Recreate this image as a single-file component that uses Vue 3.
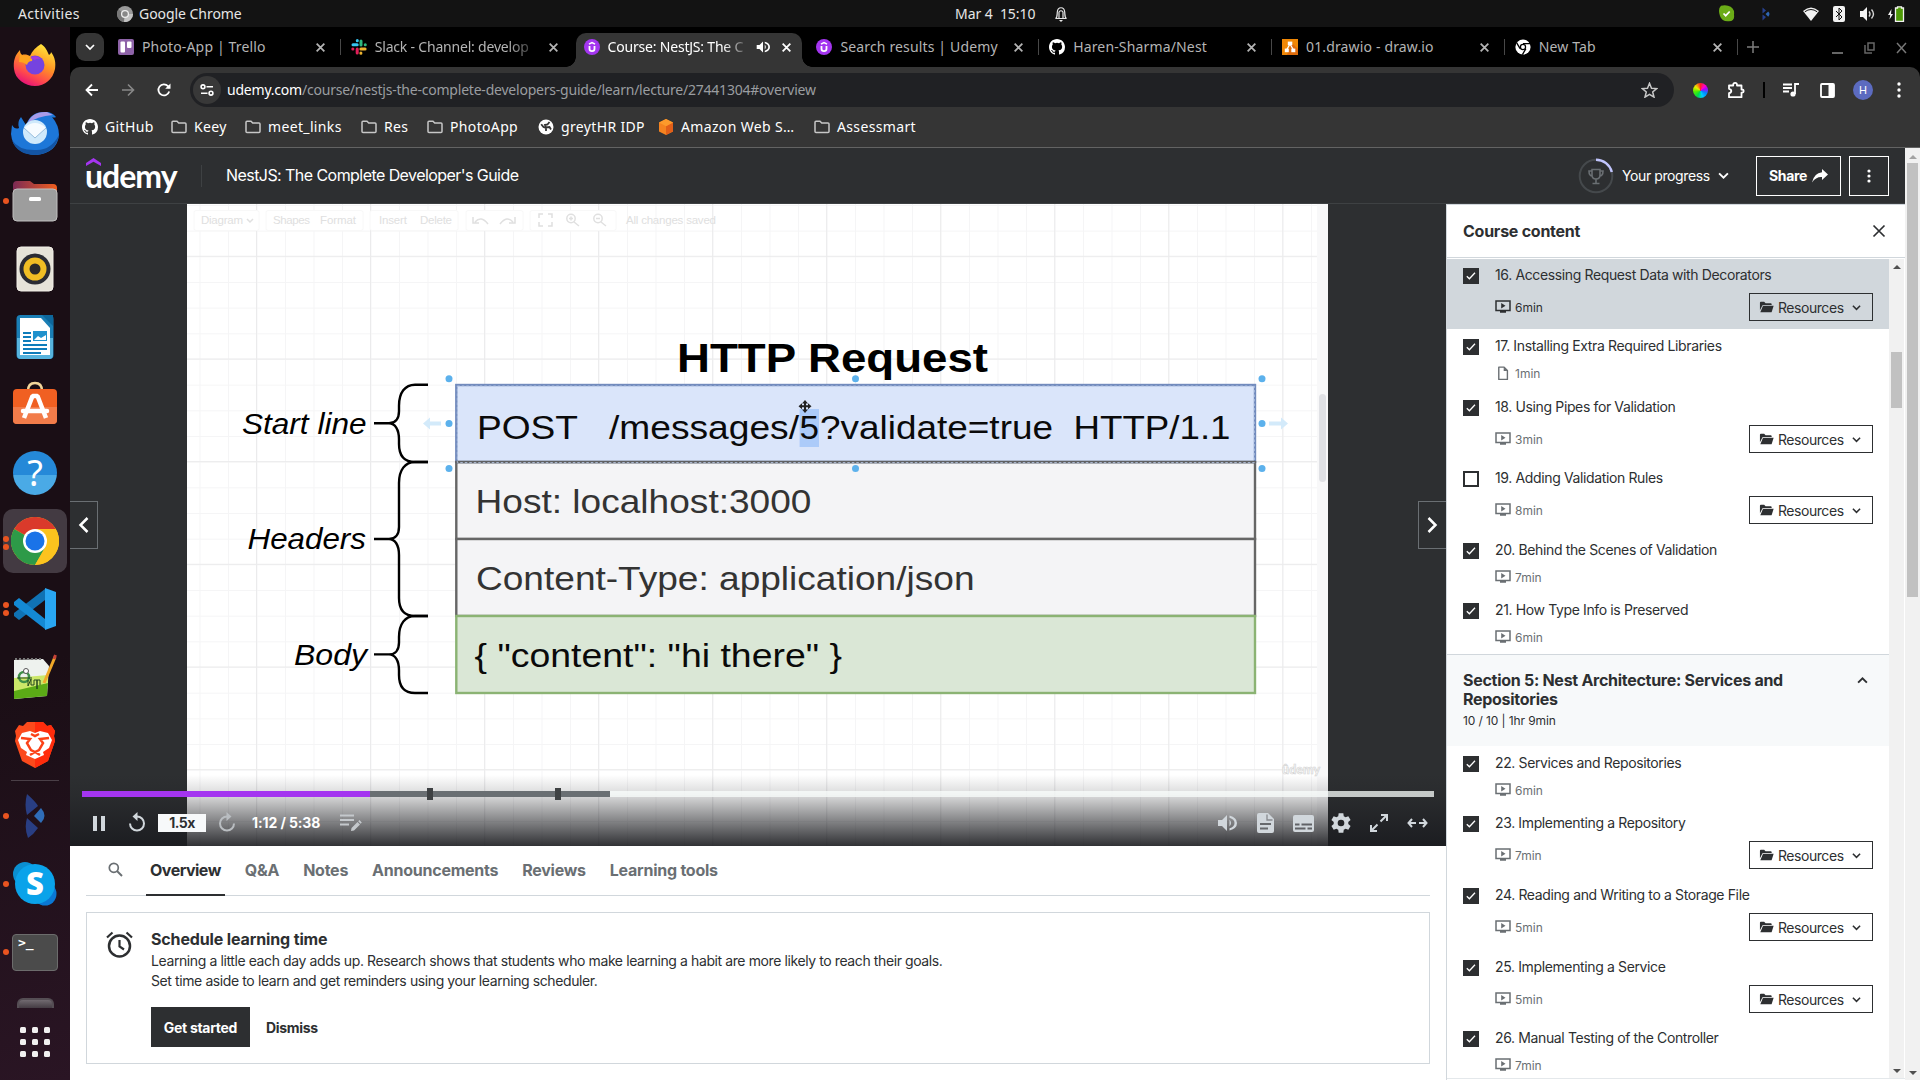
<script setup>
const tabs = [
  { title: 'Photo-App | Trello', icon: 'trello' },
  { title: 'Slack - Channel: develop', icon: 'slack', fade: true, noSep: true },
  { title: 'Course: NestJS: The C', icon: 'udemy', active: true, audio: true, fade: true, noSep: true },
  { title: 'Search results | Udemy', icon: 'udemy' },
  { title: 'Haren-Sharma/Nest', icon: 'github' },
  { title: '01.drawio - draw.io', icon: 'drawio' },
  { title: 'New Tab', icon: 'chrome' },
]

const bookmarks = [
  { label: 'GitHub', icon: 'github', width: 89 },
  { label: 'Keey', icon: 'folder', width: 74 },
  { label: 'meet_links', icon: 'folder', width: 116 },
  { label: 'Res', icon: 'folder', width: 66 },
  { label: 'PhotoApp', icon: 'folder', width: 111 },
  { label: 'greytHR IDP', icon: 'globe', width: 120 },
  { label: 'Amazon Web S…', icon: 'cube', width: 156 },
  { label: 'Assessmart', icon: 'folder', width: 110 },
]

const courseTabs = ['Overview', 'Q&A', 'Notes', 'Announcements', 'Reviews', 'Learning tools']

const lecturesBefore = [
  { title: '16. Accessing Request Data with Decorators', time: '6min', done: true, res: true, current: true, h: 70 },
  { title: '17. Installing Extra Required Libraries', time: '1min', done: true, doc: true, h: 61 },
  { title: '18. Using Pipes for Validation', time: '3min', done: true, res: true, h: 71 },
  { title: '19. Adding Validation Rules', time: '8min', res: true, h: 72 },
  { title: '20. Behind the Scenes of Validation', time: '7min', done: true, h: 60 },
  { title: '21. How Type Info is Preserved', time: '6min', done: true, h: 61 },
]
const lecturesAfter = [
  { title: '22. Services and Repositories', time: '6min', done: true, h: 60 },
  { title: '23. Implementing a Repository', time: '7min', done: true, res: true, h: 72 },
  { title: '24. Reading and Writing to a Storage File', time: '5min', done: true, res: true, h: 72 },
  { title: '25. Implementing a Service', time: '5min', done: true, res: true, h: 71 },
  { title: '26. Manual Testing of the Controller', time: '7min', done: true, h: 58 },
]
const groups = [
  { id: 4, items: lecturesBefore },
  { id: 5, heading: 'Section 5: Nest Architecture: Services and Repositories', meta: '10 / 10 | 1hr 9min', items: lecturesAfter },
]

const handles = [
  [449, 378.7], [449, 423.6], [449, 468.6],
  [855.5, 378.7], [855.5, 468.6],
  [1262, 378.7], [1262, 423.6], [1262, 468.6],
]
const braces = [
  { top: 384.7, mid: 423.3, bottom: 462 },
  { top: 462, mid: 539, bottom: 616 },
  { top: 616, mid: 654.4, bottom: 693 },
]
const bracePath = (b) =>
  `M428 ${b.top}H415C405 ${b.top} 399 ${b.top + 8} 399 ${b.top + 21}V${b.mid - 12}C399 ${b.mid - 4} 395 ${b.mid} 389 ${b.mid}H374` +
  `M389 ${b.mid}C395 ${b.mid} 399 ${b.mid + 6} 399 ${b.mid + 16}V${b.bottom - 18}C399 ${b.bottom - 5} 405 ${b.bottom} 415 ${b.bottom}H428`
</script>

<template>
  <div class="desktop">
    <!-- shared symbols -->
    <svg class="defs" width="0" height="0">
      <defs>
        <symbol id="i-github" viewBox="0 0 16 16"><path fill="#fff" d="M8 0C3.58 0 0 3.58 0 8c0 3.54 2.29 6.53 5.47 7.59.4.07.55-.17.55-.38v-1.49c-2.01.37-2.53-.49-2.69-.94-.09-.23-.48-.94-.82-1.13-.28-.15-.68-.52-.01-.53.63-.01 1.08.58 1.23.82.72 1.21 1.87.87 2.33.66.07-.52.28-.87.51-1.07-1.78-.2-3.64-.89-3.64-3.95 0-.87.31-1.59.82-2.15-.08-.2-.36-1.02.08-2.12 0 0 .67-.21 2.2.82a7.6 7.6 0 0 1 4 0c1.53-1.04 2.2-.82 2.2-.82.44 1.1.16 1.92.08 2.12.51.56.82 1.27.82 2.15 0 3.07-1.87 3.75-3.65 3.95.29.25.54.73.54 1.48v2.2c0 .21.15.46.55.38A8 8 0 0 0 16 8c0-4.42-3.58-8-8-8z"/></symbol>
        <symbol id="i-trello" viewBox="0 0 16 16"><rect width="16" height="16" rx="2" fill="#8e63a8"/><rect x="2.5" y="2.5" width="4.5" height="11" rx="1" fill="#fff"/><rect x="9" y="2.5" width="4.5" height="6.5" rx="1" fill="#fff"/></symbol>
        <symbol id="i-slack" viewBox="0 0 16 16"><g stroke-width="3" stroke-linecap="round"><path stroke="#36c5f0" d="M6.3 1.6v.1M2 5.8h4.2"/><path stroke="#2eb67d" d="M10 2v4M14.2 5.8h.1"/><path stroke="#e01e5a" d="M1.8 9.9h.1M6.2 10v4"/><path stroke="#ecb22e" d="M9.9 9.9h4.2M9.9 14.1v.1"/></g></symbol>
        <symbol id="i-udemy" viewBox="0 0 16 16"><circle cx="8" cy="8" r="8" fill="#a435f0"/><path d="M5 5.2 8 3.5l3 1.7" fill="none" stroke="#fff" stroke-width="1.5"/><path d="M5.5 7v2.8c0 3.2 5 3.2 5 0V7" fill="none" stroke="#fff" stroke-width="1.8"/></symbol>
        <symbol id="i-drawio" viewBox="0 0 16 16"><rect width="16" height="16" fill="#f08705"/><path d="m9 3 7 7v6H5z" fill="#df6c0c"/><path d="m8 5-3.500 6M8 5l3.500 6" stroke="#fff" stroke-width="1.300"/><rect x="5.800" y="2.600" width="4.500" height="3.600" fill="#fff"/><rect x="2.800" y="9.600" width="4" height="3.600" fill="#fff"/><rect x="9.300" y="9.600" width="4" height="3.600" fill="#fff"/></symbol>
        <symbol id="i-chrome" viewBox="0 0 16 16"><circle cx="8" cy="8" r="7.600" fill="#fff"/><circle cx="8" cy="8" r="2.600" fill="none" stroke="#000" stroke-width="1.300"/><path d="M8 4.700h7M5.100 9.700 1.700 3.900M10.900 9.600l-3.500 6" stroke="#000" stroke-width="1.300"/></symbol>
        <symbol id="i-folder" viewBox="0 0 16 16"><path d="M1 3.200q0-1 1-1h4l1.700 1.800h6.300q1 0 1 1v7.500q0 1-1 1H2q-1 0-1-1z" fill="none" stroke="#c7c7c7" stroke-width="1.500"/></symbol>
        <symbol id="i-globe" viewBox="0 0 16 16"><circle cx="8" cy="8" r="7.500" fill="#fff"/><path d="M3.200 5.200 5.500 8l2.500 1v3M11.500 3l-2 2.500-2.500.5 1 2.500 3.500-.5 1.500 2.500" stroke="#353535" stroke-width="1.800" fill="none"/></symbol>
        <symbol id="i-cube" viewBox="0 0 16 16"><path d="m8 0 7 3.500v9L8 16l-7-3.500v-9z" fill="#f58320"/><path d="M8 7.200V16l7-3.500v-9z" fill="#e25f19"/><path d="m8 0 7 3.500-7 3.700-7-3.700z" fill="#fd9a2b"/></symbol>
        <symbol id="i-x" viewBox="0 0 10 10"><path d="m1.500 1.500 7 7m0-7-7 7" fill="none" stroke="currentColor" stroke-width="1.600"/></symbol>
        <symbol id="i-chev" viewBox="0 0 10 10"><path d="m1 3 4 4 4-4" fill="none" stroke="currentColor" stroke-width="1.700"/></symbol>
        <symbol id="i-speaker" viewBox="0 0 20 20"><path d="M1 7h4l5-5v16l-5-5H1z" fill="currentColor"/><path d="M12.500 6.500q3 3.500 0 7M12.500 2.500q7.500 2 7.500 7.500t-7.500 7.500v-2.200q5-1.500 5-5.300t-5-5.300z" fill="currentColor"/></symbol>
        <symbol id="i-screen" viewBox="0 0 16 14"><path d="M1 1h14v9.500H1z" fill="none" stroke="currentColor" stroke-width="1.500"/><path d="M6.200 3v5.400L10.500 5.700zM5 11h6v1.800H5z" fill="currentColor"/></symbol>
        <symbol id="i-doc" viewBox="0 0 12 16"><path d="M1.500 1.200h5.700l3.500 3.500v9.600H1.500z" fill="none" stroke="currentColor" stroke-width="1.500" stroke-linejoin="round"/><path d="M6.700 1v4.300H11z" fill="currentColor"/></symbol>
        <symbol id="i-open" viewBox="0 0 16 12"><path d="M1 9.500V1.500q0-1 1-1h3.500L7 2h5.500q1 0 1 1v.8H4.600q-1 0-1.300 1z" fill="currentColor"/><path d="M4.300 4.700H15.600l-2 6.300q-.2.600-.8.600H1.400z" fill="currentColor"/></symbol>
      </defs>
    </svg>

    <header class="topbar">
      <div class="tb-left">
        <span class="activities">Activities</span>
        <svg width="16" height="16" viewBox="0 0 16 16"><circle cx="8" cy="8" r="8" fill="#999"/><path d="M8 8 1.500 3.500A8 8 0 0 0 7 16z" fill="#777"/><path d="M8 8h8A8 8 0 0 1 7 16z" fill="#c2c2c2"/><circle cx="8" cy="8" r="3.400" fill="#888" stroke="#eee" stroke-width="1.300"/></svg>
        <span class="appname">Google Chrome</span>
      </div>
      <div class="tb-mid">
        <span>Mar 4&nbsp; 15:10</span>
        <svg width="14" height="16" viewBox="0 0 14 16"><path d="M1.500 12.500c2-1 1.500-4 1.800-6.500.4-5.700 7-5.700 7.400 0 .3 2.500-.2 5.500 1.800 6.500zM5 12V6q2-2.500 4 0v6" fill="none" stroke="#e8e8e8" stroke-width="1.200"/><path d="M5 14h4l-2 2z" fill="#e8e8e8"/></svg>
      </div>
      <div class="tray">
        <svg width="17" height="17" viewBox="0 0 17 17"><path d="M3 .8q4-1 7 0 7 2 6 9 1 6-5 6.500Q4 17 2 11-.500 4 3 .8z" fill="#6bac17"/><path d="m5.500 8.500 2.200 2.200 4-4.200" fill="none" stroke="#fff" stroke-width="1.700"/></svg>
        <svg class="kl" width="8" height="14" viewBox="0 0 18 32"><path d="M1 1v14l8-7zM1 17v14l8-8z" fill="#27408f"/><path d="m8 16 6-6q6 6 0 12z" fill="#2f66b4"/></svg>
        <svg class="wf" width="16" height="14" viewBox="0 0 16 14"><path d="M0 4q8-7 16 0l-8 10z" fill="#f2f2f2"/><path d="M1.800 4.800q6.200-4.600 12.400 0" stroke="#131313" fill="none"/></svg>
        <svg class="bt" width="12" height="16" viewBox="0 0 12 16"><rect width="12" height="16" rx="2" fill="#f2f2f2"/><path d="m3 5 6 6-3 3V2l3 3-6 6" stroke="#131313" fill="none"/></svg>
        <svg class="vol" width="15" height="14" viewBox="0 0 15 14"><path d="M0 4h3l4-4v14l-4-4H0z" fill="#f2f2f2"/><path d="M9 4.500q2 2.500 0 5M11.500 2.500q4 4.500 0 9" stroke="#d6d6d6" stroke-width="1.400" fill="none"/></svg>
        <svg class="bat" width="17" height="16" viewBox="0 0 17 16"><path d="M3.500 3 0 9h2.200L1.500 13.500 5 8H3z" fill="#f2f2f2"/><path d="M7.500 2h2V.8h4V2h2v13.300h-8z" fill="#4e9a06" stroke="#f2f2f2" stroke-width="1.300"/></svg>
      </div>
    </header>

    <div class="body">
      <nav class="dock">
        <div class="di"><svg width="44" height="44" viewBox="0 0 44 44">
          <defs><linearGradient id="ff" x1=".8" y1="0" x2=".3" y2="1"><stop offset="0" stop-color="#ffee3d"/><stop offset=".45" stop-color="#ff9424"/><stop offset=".75" stop-color="#ff4a4c"/><stop offset="1" stop-color="#e50e7c"/></linearGradient></defs>
          <path d="M28 1c5 3 6 7 8 11 2-1 2-3 2-3 4 5 5 11 4 17-2 10-10 17-20 17S2 36 1 26C0 18 2 12 7 7c0 3 1 4 2 5 3-1 6 0 8 1 2-5 6-9 11-12z" fill="url(#ff)"/><circle cx="22" cy="22" r="9.500" fill="#7543e0"/><path d="M7 11q5 3 10 2 3 3 2 5-4 0-5 4-3-3-8-3z" fill="#ffa51f"/><path d="M17 15q6-4 11 1-5-1-6 1z" fill="#a33be0"/></svg></div>
        <div class="di"><svg width="50" height="46" viewBox="0 0 50 46">
          <path d="M2 15q3 5 7 3Q7 12 11 7q3 5 5 8 5-14 20-13 6 0 10 5-2 1-4 0 7 8 7 18-2 18-23 20Q3 44 1 24z" fill="#1d77d8"/><path d="M2 30q5 15 24 15 20-2 23-20-8 15-22 15Q9 41 2 30z" fill="#1354a3"/><path d="M17 14q5-13 20-12l6 3Q27 6 17 14z" fill="#a99be8"/><circle cx="25" cy="22" r="12" fill="#cfe9fb"/><path d="M14 18q11-10 22 0l-11 10z" fill="#f6fbff"/><path d="m14 18 11 10 11-10" fill="none" stroke="#97bddc"/></svg></div>
        <div class="di"><i class="run"></i><svg width="46" height="42" viewBox="0 0 46 42"><defs><linearGradient id="fd"><stop offset="0" stop-color="#7c2a55"/><stop offset="1" stop-color="#f05e1e"/></linearGradient></defs><path d="M1 10V5q0-4 4-4h13l4 3h19q4 0 4 4v6z" fill="url(#fd)"/><rect x="1" y="9" width="44" height="32" rx="4" fill="#9d9d9d" stroke="#c0bfbf"/><rect x="17" y="17" width="12" height="4" rx="1.500" fill="#fff"/></svg></div>
        <div class="di"><svg width="38" height="46" viewBox="0 0 38 46"><rect x="1" y="1" width="36" height="44" rx="4" fill="#e6e2d8" stroke="#f2efe8"/><circle cx="19" cy="23" r="15.500" fill="#2b2b33"/><circle cx="19" cy="23" r="11.500" fill="#f0bd24"/><circle cx="19" cy="23" r="5.500" fill="#2a2a2a"/></svg></div>
        <div class="di"><svg width="38" height="46" viewBox="0 0 38 46"><rect x=".500" y="1" width="37" height="44" rx="4" fill="#1a7eb5"/><path d="M1 24h36v17q0 4-4 4H5q-4 0-4-4z" fill="#57b3dd"/><path d="M4 4h21l9 10v27H4z" fill="#fff"/><path d="M26 1h11v11z" fill="#0d679c"/><path d="M7 19h8M7 23h8M7 27h8M7 31h24M7 35h24M7 39h18" stroke="#0f7cba" stroke-width="2"/><rect x="17" y="17" width="14" height="10" fill="#2091cc"/><path d="m18 26 4-4 3 2 5-3v5z" fill="#fff"/></svg></div>
        <div class="di bag"><svg width="46" height="44" viewBox="0 0 46 44"><path d="M16 10q0-8 7-8t7 8" stroke="#f3d69a" stroke-width="2.500" fill="none"/><rect x="1" y="8" width="44" height="35" rx="4" fill="#f06022"/><path d="M1 26h44v13q0 4-4 4H5q-4 0-4-4z" fill="#f27c4a"/><path d="m12 37 8.500-22h5L34 37" fill="none" stroke="#fff" stroke-width="4.500" stroke-linejoin="bevel"/><path d="M11 30h24" stroke="#fff" stroke-width="4.500" stroke-linecap="round"/></svg></div>
        <div class="di"><span class="help">?</span></div>
        <div class="di cur"><i class="run"></i><i class="run"></i><svg width="48" height="48" viewBox="0 0 48 48"><circle cx="24" cy="24" r="24" fill="#fcc31e"/><path d="M24 24 3.200 12A24 24 0 0 1 44.800 12z" fill="#da3a2b"/><path d="M24 24 3.200 12A24 24 0 0 0 24 48l10.400-18z" fill="#2d9a48"/><path d="M24 12h20.800A24 24 0 0 1 24 48l10.400-18z" fill="#fcc31e"/><circle cx="24" cy="24" r="12" fill="#fff"/><circle cx="24" cy="24" r="9.500" fill="#1a73e8"/></svg></div>
        <div class="di"><i class="run"></i><i class="run"></i><svg width="42" height="42" viewBox="0 0 42 42"><path d="M31 1v11L5 32l-5-4v-3z" fill="#1072b4"/><path d="m0 14 5-4 26 21v10L0 17z" fill="#1489d4"/><path d="m31 0 11 4v34l-11 4z" fill="#29a6f2"/></svg></div>
        <div class="di"><svg width="44" height="46" viewBox="0 0 44 46"><path d="M1 6 30 5l6 7-2 30L1 45z" fill="#eef2ee"/><path d="m1 34 34-6-1 14L1 45z" fill="#5bab16"/><path d="m1 24 34-3v8L1 37z" fill="#cce869"/><path d="M2 5h26" stroke="#777" stroke-dasharray="2 2" stroke-width="2"/><circle cx="11" cy="23" r="5" fill="none" stroke="#3f9048" stroke-width="2.500"/><circle cx="13" cy="17" r="2.500" fill="#fff" stroke="#555"/><path d="M4 24h15M15 26v6l3-7v6h3v-5h3v9-9h3v5" fill="none" stroke="#23471e"/><path d="m31 29 11-26" stroke="#f0a828" stroke-width="3"/><path d="m41 5 1.500-4" stroke="#c54238" stroke-width="3"/></svg></div>
        <div class="di"><svg width="42" height="48" viewBox="0 0 42 48"><path d="M13 1h16l4 4 4-1 4 6-1 5 1 5-7 20-13 7-13-7L1 20l1-5-1-5 4-6 4 1z" fill="#fb4a1c"/><path d="M21 1h8l4 4 4-1 4 6-1 5 1 5-7 20-13 7z" fill="#ff2c0c"/><path d="m8 12 8-2 5 2 5-2 8 2 4 7-3 8-6 4 1 3-9 4-9-4 1-3-6-4-3-8z" fill="#fff"/><path d="m7 17 9 1-3 4 4 7 4 2 4-2 4-7-3-4 9-1M16 34l5-3 5 3M17 13l4 2 4-2" fill="none" stroke="#fb4218" stroke-width="2.500"/></svg></div>
        <hr />
        <div class="di"><i class="run"></i><svg width="20" height="44" viewBox="0 0 20 44"><path d="M2 0q9 8 11 12L2 21q-3-10 0-21zM2 24l11 10Q9 40 3 44-1 34 2 24z" fill="#293e83"/><path d="m9 22 7-8q7 8 0 15z" fill="#2f6db8"/></svg></div>
        <div class="di"><i class="run"></i><span class="skype"><svg width="44" height="44" viewBox="0 0 44 44"><circle cx="12" cy="12" r="12" fill="#0b8fd0"/><circle cx="32" cy="32" r="11.500" fill="#0a78d4"/><circle cx="22" cy="22" r="20" fill="#0aa3ea"/></svg><b>S</b></span></div>
        <div class="di"><i class="run"></i><span class="term">&gt;_</span></div>
        <div class="trash"></div>
        <div class="grid9"><i v-for="n in 9" :key="n"></i></div>
      </nav>

      <div class="chrome">
        <div class="tabstrip">
          <div class="tabsearch"><svg width="10" height="10"><use href="#i-chev" /></svg></div>
          <div v-for="t in tabs" :key="t.title" class="tab" :class="{ active: t.active, nosep: t.noSep }">
            <svg class="fav" width="16" height="16"><use :href="'#i-' + t.icon" /></svg>
            <span class="ttl" :class="{ fade: t.fade }">{{ t.title }}</span>
            <svg v-if="t.audio" class="aud" width="14" height="14"><use href="#i-speaker" /></svg>
            <svg class="x" width="11" height="11"><use href="#i-x" /></svg>
          </div>
          <svg class="plus" width="12" height="12" viewBox="0 0 12 12"><path d="M6 0v12M0 6h12" stroke="#7d7d7d" stroke-width="1.500" /></svg>
          <div class="wctl">
            <svg width="11" height="12" viewBox="0 0 11 12"><path d="M0 11h11" stroke="#666" stroke-width="2" /></svg>
            <svg width="11" height="12" viewBox="0 0 11 12"><path d="M4 1h6v7H4zM1 3v8h7" fill="none" stroke="#666" stroke-width="1.500" /></svg>
            <svg width="11" height="12" viewBox="0 0 11 12"><path d="m1 1 9 10M10 1 1 11" stroke="#777" stroke-width="1.500" /></svg>
          </div>
        </div>

        <div class="toolbar">
          <svg class="nb" width="14" height="14" viewBox="0 0 14 14"><path d="M13 7H2m5-5.500L1.500 7 7 12.500" fill="none" stroke="#fff" stroke-width="1.800" /></svg>
          <svg class="nb" width="14" height="14" viewBox="0 0 14 14"><path d="M1 7h11M7 1.500 12.500 7 7 12.500" fill="none" stroke="#888" stroke-width="1.600" /></svg>
          <svg class="nb" width="14" height="14" viewBox="0 0 14 14"><path d="M12.200 8.500A5.500 5.500 0 1 1 11 3.200l1.500 1.600" fill="none" stroke="#fff" stroke-width="1.800" /><path d="M13.500.5v5.300H8.200z" fill="#fff" /></svg>
          <div class="omni">
            <div class="site"><svg width="14" height="12" viewBox="0 0 14 12"><g fill="none" stroke="#fff" stroke-width="1.600"><circle cx="3" cy="2.800" r="1.900" /><path d="M6.500 2.800H13M1 9.200h6.500" /><circle cx="11" cy="9.200" r="1.900" /></g></svg></div>
            <span class="url"><b>udemy.com</b>/course/nestjs-the-complete-developers-guide/learn/lecture/27441304#overview</span>
            <svg class="star" width="17" height="16" viewBox="0 0 17 16"><path d="m8.500 1.300 2 4.900 5.200.4-4 3.400 1.300 5.100-4.500-2.800-4.500 2.800L5.300 10l-4-3.400 5.200-.4z" fill="none" stroke="#c8c8c8" stroke-width="1.500" /></svg>
          </div>
          <div class="ext">
            <div class="e"><span class="wheel"></span></div>
            <div class="e"><svg width="18" height="18" viewBox="0 0 18 18"><path d="M2 4.500h4.200V3.800q0-2 1.900-2t1.900 2v.7h4.500v4h.7q1.500.2 1.500 1.500t-1.500 1.600h-.7v4.600H2v-4q2.300-.5 2.300-2.200T2 7.800z" fill="none" stroke="#fff" stroke-width="1.800" stroke-linejoin="round" /></svg></div>
            <div class="bar"></div>
            <div class="e"><svg width="16" height="14" viewBox="0 0 16 14"><path d="M0 1.500h9M0 5h9M0 8.500h6M12 11V1h4" stroke="#fff" stroke-width="1.800" fill="none" /><circle cx="10" cy="11" r="2.600" fill="#fff" /></svg></div>
            <div class="e"><svg width="15" height="15" viewBox="0 0 15 15"><rect x="1" y="1" width="13" height="13" rx="1" fill="none" stroke="#fff" stroke-width="1.800" /><path d="M8.500 1H14v13H8.500z" fill="#fff" /></svg></div>
            <div class="e"><span class="ava">H</span></div>
            <div class="e"><svg width="4" height="16" viewBox="0 0 4 16" fill="#fff"><circle cx="2" cy="2" r="1.700" /><circle cx="2" cy="8" r="1.700" /><circle cx="2" cy="14" r="1.700" /></svg></div>
          </div>
        </div>

        <div class="bookmarks">
          <div v-for="b in bookmarks" :key="b.label" class="bm" :style="{ width: b.width + 'px' }">
            <svg width="16" height="16"><use :href="'#i-' + b.icon" /></svg><span>{{ b.label }}</span>
          </div>
        </div>

        <div class="page">
          <div class="site-col">
            <header class="uhead">
              <div class="logo"><svg width="15" height="8" viewBox="0 0 15 8"><path d="M0 8V5l7.500-5L15 5v3L7.500 3.800z" fill="#a435f0" /></svg><span>udemy</span></div>
              <div class="vsep"></div>
              <span class="ctitle">NestJS: The Complete Developer's Guide</span>
              <div class="prog">
                <svg width="36" height="36" viewBox="0 0 36 36"><circle cx="18" cy="18" r="16.300" fill="none" stroke="#45494c" stroke-width="2" /><path d="M18 1.700A16.300 16.300 0 0 1 33.800 14" fill="none" stroke="#c0c4fc" stroke-width="2.500" /><path d="M14 11.500h8v5.500q0 4-4 4t-4-4zM14 13h-3q0 5 3.500 5M22 13h3q0 5-3.500 5M18 21v4M14.500 25.500h7" fill="none" stroke="#6a6f73" stroke-width="1.600" /></svg>
                <span>Your progress</span>
                <svg width="11" height="11"><use href="#i-chev" /></svg>
              </div>
              <button class="share">Share <svg width="16" height="14" viewBox="0 0 16 14"><path d="M10 0l6 5.500L10 11V8Q4 7.500 0 13.500 2 4 10 3.200z" fill="#fff" /></svg></button>
              <button class="more"><svg width="4" height="14" viewBox="0 0 4 14" fill="#fff"><circle cx="2" cy="2" r="1.600" /><circle cx="2" cy="7" r="1.600" /><circle cx="2" cy="12" r="1.600" /></svg></button>
            </header>

            <div class="main">
              <div class="left">
                <section class="player">
                  <svg class="frame" width="1141" height="642" viewBox="187 204 1141 642">
                    <defs>
                      <pattern id="minor" x="256.500" y="256.300" width="28.500" height="25.670" patternUnits="userSpaceOnUse"><path d="M0 0V26M0 0H29" stroke="#f5f5f6" stroke-width="1.800" /></pattern>
                      <pattern id="major" x="256" y="255.800" width="114.030" height="102.670" patternUnits="userSpaceOnUse"><path d="M.5 0V103M0 .5H115" stroke="#ebebec" stroke-width="1" /></pattern>
                    </defs>
                    <rect x="187" y="204" width="1141" height="642" fill="#fff" />
                    <rect x="187" y="204" width="1141" height="642" fill="url(#minor)" />
                    <rect x="187" y="204" width="1141" height="642" fill="url(#major)" />
                    <rect x="1317" y="204" width="11" height="642" fill="#f8f8f9" />
                    <rect x="1319" y="394" width="7" height="88" rx="3.500" fill="#e0e1e5" />

                    <g fill="#fff" stroke="#f8f8f8"><rect x="194" y="210.500" width="65" height="20" rx="2" /><rect x="266" y="210.500" width="97" height="20" rx="2" /><rect x="370" y="210.500" width="88" height="20" rx="2" /><rect x="466" y="210.500" width="57" height="20" rx="2" /><rect x="530" y="210.500" width="86" height="20" rx="2" /></g>
                    <g class="dtool">
                      <text x="201" y="223.500" textLength="42">Diagram</text>
                      <text x="273" y="223.500" textLength="37">Shapes</text>
                      <text x="320" y="223.500" textLength="36">Format</text>
                      <text x="379" y="223.500" textLength="28">Insert</text>
                      <text x="420" y="223.500" textLength="32">Delete</text>
                      <text x="626" y="224" textLength="90">All changes saved</text>
                    </g>
                    <g fill="none" stroke="#e0e0e0" stroke-width="1.500"><path d="m247 219 3 3 3-3M475 222q6-7 13 2M473 217v6h6M513 222q-6-7-13 2M515 217v6h-6" /><path d="M539 218v-4h4M548 214h4v4M552 222v4h-4M543 226h-4v-4" /><circle cx="571" cy="218.500" r="4.200" /><path d="m574 222 5 4M569 218.500h4M571 216.500v4" /><circle cx="598" cy="218.500" r="4.200" /><path d="m601 222 5 4M596 218.500h4" /></g>

                    <text class="bold" x="677" y="371.700" font-size="40.500" textLength="311" lengthAdjust="spacingAndGlyphs">HTTP Request</text>

                    <g stroke-width="2.400">
                      <rect x="456.300" y="462" width="798.700" height="77" fill="#f4f4f6" stroke="#666" />
                      <rect x="456.300" y="539" width="798.700" height="77" fill="#f4f4f6" stroke="#666" />
                      <rect x="456.300" y="616" width="798.700" height="77" fill="#dae7d6" stroke="#8bb373" />
                      <rect x="456.300" y="385" width="798.700" height="77" fill="#dae5fa" stroke="#728bbd" />
                      <path d="M455.100 462h801" stroke="#5f6062" />
                    </g>
                    <rect x="457.300" y="386" width="797" height="76.500" fill="none" stroke="#b9c9e6" stroke-width=".800" stroke-dasharray="2.500 2" />
                    <rect x="799.600" y="409" width="19.400" height="38" fill="#accbf9" />
                    <g font-size="33.800" fill="#0a0a0a">
                      <text x="477" y="439" textLength="101" lengthAdjust="spacingAndGlyphs">POST</text>
                      <text x="609" y="439" textLength="190" lengthAdjust="spacingAndGlyphs">/messages/</text>
                      <text x="799.600" y="439" textLength="19.500" lengthAdjust="spacingAndGlyphs">5</text>
                      <text x="820" y="439" textLength="233" lengthAdjust="spacingAndGlyphs">?validate=true</text>
                      <text x="1073.500" y="439" textLength="157" lengthAdjust="spacingAndGlyphs">HTTP/1.1</text>
                    </g>
                    <g font-size="33.800" fill="#333">
                      <text x="475.500" y="513" textLength="336" lengthAdjust="spacingAndGlyphs">Host: localhost:3000</text>
                      <text x="476" y="590" textLength="498.500" lengthAdjust="spacingAndGlyphs">Content-Type: application/json</text>
                    </g>
                    <text x="474.500" y="667" font-size="33.800" fill="#0a0a0a" textLength="367.500" lengthAdjust="spacingAndGlyphs">{ "content": "hi there" }</text>

                    <g class="ital" font-size="28.800">
                      <text x="242" y="433.500" textLength="124.500" lengthAdjust="spacingAndGlyphs">Start line</text>
                      <text x="247.500" y="549" textLength="118.500" lengthAdjust="spacingAndGlyphs">Headers</text>
                      <text x="294" y="664.500" textLength="73" lengthAdjust="spacingAndGlyphs">Body</text>
                    </g>
                    <path v-for="b in braces" :key="b.top" :d="bracePath(b)" fill="none" stroke="#000" stroke-width="2.400" />
                    <circle v-for="(h, i) in handles" :key="i" :cx="h[0]" :cy="h[1]" r="3.500" fill="#5cb1ec" />
                    <path d="M423 423.600l7-6v4h11v4h-11v4zM1288 423.600l-7-6v4h-12v4h12v4z" fill="#d3eafa" />
                    <path d="m805 400 3 3.500h-2v1.800h2v-2l3.500 3-3.500 3v-2h-2v2.200h2l-3 3.500-3-3.500h2v-2.200h-2v2l-3.500-3 3.500-3v2h2v-1.800h-2z" fill="#222" />
                    <text x="1282" y="774" class="wm" textLength="38">ûdemy</text>
                  </svg>
                  <div class="pnav prev"><svg width="11" height="18" viewBox="0 0 11 18"><path d="M9.500 2 2.500 9l7 7" fill="none" stroke="#fff" stroke-width="2.500" /></svg></div>
                  <div class="pnav next"><svg width="11" height="18" viewBox="0 0 11 18"><path d="m1.500 2 7 7-7 7" fill="none" stroke="#fff" stroke-width="2.500" /></svg></div>
                  <div class="controls">
                    <div class="track"><i class="played"></i><i class="buffered"></i><b class="mark m1"></b><b class="mark m2"></b></div>
                    <div class="crow">
                      <svg class="c c1" width="12" height="15" viewBox="0 0 12 15"><path d="M0 0h4v15H0zM8 0h4v15H8z" fill="#d1d7dc" /></svg>
                      <svg class="c c2" width="18" height="20" viewBox="0 0 18 20"><path d="M9 4.500A7 7 0 1 1 2 11.500" fill="none" stroke="#d1d7dc" stroke-width="2" /><path d="M9.500 0v9L4.500 4.500z" fill="#d1d7dc" /></svg>
                      <span class="rate">1.5x</span>
                      <svg class="c c3" width="18" height="20" viewBox="0 0 18 20"><path d="M9 4.500A7 7 0 1 0 16 11.500" fill="none" stroke="#b9bdc1" stroke-width="2" /><path d="M8.500 0v9L13.500 4.500z" fill="#b9bdc1" /></svg>
                      <span class="time">1:12 / 5:38</span>
                      <svg class="c c4" width="22" height="18" viewBox="0 0 22 18"><path d="M0 1.500h14M0 6h14M0 10.500h9" stroke="#c4c8cc" stroke-width="2.200" /><path d="m11 17 .5-3 6-6 2.500 2.500-6 6zM18.200 7.300l1.300-1.200 2.300 2.400-1.200 1.200z" fill="#c4c8cc" /></svg>
                      <div class="cr">
                        <svg width="20" height="20"><use href="#i-speaker" /></svg>
                        <svg width="17" height="20" viewBox="0 0 17 20"><path d="M2 0h9l6 6v12q0 2-2 2H2q-2 0-2-2V2q0-2 2-2z" fill="#d1d7dc" /><path d="M10 1.500V7h5.500" fill="none" stroke="#888a8e" stroke-width="1.300" /><path d="M3 11h11M3 15.500h8" stroke="#67696d" stroke-width="2" /></svg>
                        <svg width="21" height="17" viewBox="0 0 21 17"><rect width="21" height="17" rx="2" fill="#d1d7dc" /><path d="M2 9.500h4.500M8.500 9.500H19M2 13.500h10.500M14.500 13.500H19" stroke="#606266" stroke-width="1.800" /></svg>
                        <svg width="20" height="20" viewBox="0 0 24 24"><path fill="#d1d7dc" d="M20.700 13.300a8 8 0 0 0 0-2.600l2.800-2.200-2.700-4.600-3.300 1.300a9 9 0 0 0-2.200-1.300L14.800.4H9.200l-.5 3.500a9 9 0 0 0-2.200 1.300L3.200 3.900.5 8.500l2.800 2.200a8 8 0 0 0 0 2.600L.5 15.500l2.700 4.600 3.300-1.300q1 .8 2.200 1.300l.5 3.500h5.600l.5-3.500q1.200-.5 2.200-1.300l3.300 1.300 2.700-4.600zM12 16a4 4 0 1 1 0-8 4 4 0 0 1 0 8z" /></svg>
                        <svg width="18" height="18" viewBox="0 0 18 18"><path d="M11 1h6v6M17 1l-6.500 6.500M7 17H1v-6M1 17l6.500-6.500" fill="none" stroke="#d1d7dc" stroke-width="2" /></svg>
                        <svg width="21" height="10" viewBox="0 0 21 10"><path d="M5 1 1.500 5 5 9M1.500 5H9M16 1l3.500 4L16 9M19.500 5H12" fill="none" stroke="#d1d7dc" stroke-width="2" /></svg>
                      </div>
                    </div>
                  </div>
                </section>

                <section class="below">
                  <div class="ctabs">
                    <svg class="mag" width="15" height="15" viewBox="0 0 15 15"><circle cx="5.800" cy="5.800" r="4.500" fill="none" stroke="#6a6f73" stroke-width="1.700" /><path d="m9 9 5 5" stroke="#6a6f73" stroke-width="2" /></svg>
                    <span v-for="(c, i) in courseTabs" :key="c" class="ct" :class="{ on: i === 0 }">{{ c }}</span>
                  </div>
                  <div class="card">
                    <svg class="alarm" width="27" height="27" viewBox="0 0 27 27"><circle cx="13.500" cy="15" r="10.500" fill="none" stroke="#2d2f31" stroke-width="2.500" /><path d="M1 6.500 6.500 1.500M26 6.500l-5.500-5M13.500 9v6.500l4.500 3" fill="none" stroke="#2d2f31" stroke-width="2.200" /></svg>
                    <div>
                      <h3>Schedule learning time</h3>
                      <p>Learning a little each day adds up. Research shows that students who make learning a habit are more likely to reach their goals.<br />Set time aside to learn and get reminders using your learning scheduler.</p>
                      <div class="btns"><button class="go">Get started</button><button class="dis">Dismiss</button></div>
                    </div>
                  </div>
                </section>
              </div>

              <aside class="side">
                <div class="shead"><span>Course content</span><svg width="14" height="14" viewBox="0 0 14 14"><path d="m1.500 1.500 11 11m0-11-11 11" stroke="#2d2f31" stroke-width="1.700" /></svg></div>
                <div class="scroll">
                  <div class="list">
                    <template v-for="g in groups" :key="g.id">
                      <div v-if="g.heading" class="sec">
                        <div class="sh"><span>{{ g.heading }}</span><svg width="11" height="11"><use href="#i-chev" /></svg></div>
                        <div class="sm">{{ g.meta }}</div>
                      </div>
                      <div v-for="l in g.items" :key="l.title" class="lec" :class="{ current: l.current, short: !l.res }" :style="{ height: l.h + 'px' }">
                        <span class="cb" :class="{ done: l.done }"><svg v-if="l.done" width="10" height="8" viewBox="0 0 10 8"><path d="m.8 4.200 2.600 2.600L9 .8" fill="none" stroke="#fff" stroke-width="1.300" /></svg></span>
                        <div class="lb">
                          <div class="lt">{{ l.title }}</div>
                          <div class="lm">
                            <svg v-if="l.doc" class="docicon" width="12" height="15"><use href="#i-doc" /></svg>
                            <svg v-else width="16" height="14"><use href="#i-screen" /></svg>
                            <span>{{ l.time }}</span>
                            <button v-if="l.res" class="res"><svg width="15" height="12"><use href="#i-open" /></svg><span>Resources</span><svg class="cv" width="9" height="9"><use href="#i-chev" /></svg></button>
                          </div>
                        </div>
                      </div>
                    </template>
                  </div>
                  <div class="sb inner"><i class="up"></i><i class="down"></i><b></b></div>
                </div>
              </aside>
            </div>
          </div>
          <div class="sb outer"><i class="up"></i><i class="down"></i><b></b></div>
        </div>
      </div>
    </div>
  </div>
</template>

<style>
html, body { margin: 0; overflow: hidden; background: #000; }
</style>

<style scoped>
* { box-sizing: border-box; }
svg { display: block; flex: none; }
button { font: inherit; letter-spacing: inherit; background: none; border: 0; padding: 0; margin: 0; color: inherit; }
.defs { position: absolute; }
.desktop { width: 1920px; height: 1080px; overflow: hidden; display: flex; flex-direction: column; font-family: "Noto Sans", sans-serif; font-size: 14px; color: #fff; }

.topbar { height: 27px; flex: none; background: #131313; display: flex; align-items: center; color: #e6e6e6; letter-spacing: -.05px; }
.topbar span { padding-bottom: 1px; }
.tb-left { display: flex; align-items: center; padding-left: 18px; width: 955px; }
.activities { width: 99px; letter-spacing: .35px; }
.appname { margin-left: 6px; }
.tb-mid { display: flex; align-items: center; width: 763px; }
.tb-mid span { width: 99px; }
.tray { display: flex; align-items: center; }
.tray .kl { margin-left: 27px; }
.tray .wf { margin-left: 33px; }
.tray .bt { margin-left: 14px; }
.tray .vol { margin-left: 15px; }
.tray .bat { margin-left: 13px; }

.body { flex: 1; display: flex; min-height: 0; }
.dock { width: 70px; flex: none; background: linear-gradient(165deg, #1a0e15 60%, #2a1524); display: flex; flex-direction: column; align-items: center; padding-top: 4px; }
.di { width: 64px; height: 68px; flex: none; display: flex; align-items: center; justify-content: center; position: relative; }
.di.bag { padding-bottom: 5px; }
.di.cur { background: #433a42; border-radius: 10px; height: 64px; margin: 2px 0; }
.run { position: absolute; left: 0; top: 31px; width: 6px; height: 6px; border-radius: 50%; background: #e95420; }
.run:first-child:has(+ .run) { top: 27px; }
.run + .run { top: 35px; }
.help { width: 44px; height: 44px; border-radius: 50%; background: linear-gradient(#2589d8 54%, #4aaae6 54%); font: 36px/43px "Noto Sans", sans-serif; text-align: center; }
.skype { display: grid; }
.skype > * { grid-area: 1 / 1; }
.skype b { font: 800 31px/43px "Open Sans", sans-serif; text-align: center; z-index: 1; }
.term { width: 46px; height: 37px; border-radius: 4px; background: #4b4b4b; border: 1px solid #6c6c6c; font: bold 13px/16px "DejaVu Sans Mono", monospace; padding-left: 5px; }
.dock hr { width: 48px; height: 1px; border: 0; background: #4a3f47; margin: 1px 0 1px; }
.trash { width: 37px; height: 10px; border-radius: 6px 6px 0 0; background: linear-gradient(#716a70, #443c43); margin-top: 12px; border: 2px solid #554e54; border-bottom: 0; }
.grid9 { display: grid; grid-template-columns: repeat(3, 6px); gap: 6px; margin-top: 19px; }
.grid9 i { height: 6px; border-radius: 1.500px; background: #f1f0f0; }

.chrome { flex: 1; min-width: 0; display: flex; flex-direction: column; background: linear-gradient(#000 60px, #353535 60px); }
.tabstrip { height: 40px; flex: none; background: #000; display: flex; align-items: flex-start; padding: 6px 0 0 6px; color: #b4b4b4; }
.tabsearch { width: 28px; height: 28px; border-radius: 9px; background: #353535; display: flex; align-items: center; justify-content: center; margin-right: 3px; color: #fff; }
.tab { width: 232.800px; flex: none; height: 28px; display: flex; align-items: center; padding: 0 14px 0 11px; position: relative; }
.tab::after { content: ""; position: absolute; right: -1px; top: 6px; width: 1px; height: 16px; background: #484848; }
.tab.nosep::after { display: none; }
.tab .fav { margin-right: 8px; }
.ttl { flex: 1; white-space: nowrap; overflow: hidden; letter-spacing: .15px; padding-bottom: 1px; }
.ttl.fade { -webkit-mask-image: linear-gradient(90deg, #000 80%, transparent 100%); mask-image: linear-gradient(90deg, #000 80%, transparent 100%); margin-right: 7px; letter-spacing: -.2px; }
.tab .aud { margin-right: 11px; }
.tab.active .ttl { margin-right: 5px; }
.tab.active { color: #fff; height: 34px; padding-bottom: 6px; background: #353535; border-radius: 10px 10px 0 0; margin: 0 3px; width: 226.800px; padding-left: 8px; padding-right: 10px; }
.tab.active::before { content: ""; position: absolute; left: -10px; right: -10px; bottom: 0; height: 10px; background: radial-gradient(circle at 0 0, transparent 9.500px, #353535 10px) left / 10px 10px no-repeat, radial-gradient(circle at 100% 0, transparent 9.500px, #353535 10px) right / 10px 10px no-repeat; }
.plus { margin: 8px 0 0 10px; }
.wctl { display: flex; gap: 21px; margin: 9px 13px 0 auto; }

.toolbar { height: 40px; padding-top: 6px; flex: none; display: flex; align-items: center; padding-left: 15px; background: #353535; border-radius: 10px 10px 0 0; }
.nb { margin-right: 22px; }
.nb:nth-of-type(3) { margin-right: 19px; }
.omni { width: 1484px; height: 34px; border-radius: 17px; background: #202124; display: flex; align-items: center; padding-left: 3px; }
.site { width: 28px; height: 28px; border-radius: 50%; background: #383838; display: flex; align-items: center; justify-content: center; margin-right: 6px; }
.url { color: #9a9da0; letter-spacing: -.215px; flex: 1; padding-bottom: 1px; }
.url b { font-weight: 400; color: #fff; }
.star { margin-right: 16px; }
.ext { display: flex; align-items: center; margin-left: 8px; }
.e { width: 36px; display: flex; justify-content: center; }
.ext .bar { width: 2px; height: 16px; background: #000; margin: 0 8px 0 9px; }
.wheel { width: 15px; height: 15px; border-radius: 50%; background: conic-gradient(#f22, #f0c 12%, #a0f 20%, #08f 32%, #0cf 45%, #0d4 58%, #5e0 72%, #ee0 85%, #f22); }
.ava { width: 20px; height: 20px; border-radius: 50%; background: #5c6bc0; font: 11px/20px "Liberation Sans", sans-serif; text-align: center; }
.bookmarks { height: 41px; flex: none; background: #353535; border-bottom: 1px solid #636363; display: flex; align-items: center; padding-left: 12px; letter-spacing: .35px; }
.bm { display: flex; align-items: center; gap: 7px; white-space: nowrap; }
.bm span { padding-bottom: 1px; }

.page { flex: 1; min-height: 0; display: flex; font-family: Inter, sans-serif; color: #2d2f31; background: #fff; }
.site-col { width: 1835px; display: flex; flex-direction: column; }
.uhead { height: 56px; flex: none; background: #2d2f31; border-bottom: 1px solid #3e4143; color: #fff; display: flex; align-items: center; }
.logo { width: 131px; padding-left: 15px; height: 55px; position: relative; }
.logo svg { position: absolute; left: 16px; top: 10px; }
.logo span { display: block; font: 700 32px/32px Lato, sans-serif; padding-top: 12px; letter-spacing: -1px; }
.vsep { width: 1px; height: 22px; background: #3e4143; margin-right: 24px; }
.ctitle { font-size: 16px; letter-spacing: -.56px; padding-bottom: 1px; }
.prog { margin-left: auto; display: flex; align-items: center; width: 178px; font-size: 14px; letter-spacing: -.4px; }
.prog span { margin: 0 8px 0 8px; padding-bottom: 1px; }
.share { width: 85px; height: 40px; border: 1px solid #fff; font-weight: 700; font-size: 14px; display: flex; align-items: center; justify-content: center; gap: 5px; margin-right: 8px; letter-spacing: -.3px; }
.more { width: 40px; height: 40px; border: 1px solid #fff; display: flex; align-items: center; justify-content: center; margin-right: 16px; }

.main { flex: 1; min-height: 0; display: flex; }
.left { width: 1376px; flex: none; display: flex; flex-direction: column; }
.player { height: 642px; flex: none; background: #2d2f31; position: relative; padding-left: 117px; }
.frame { font-family: "Liberation Sans", sans-serif; }
.frame text { white-space: pre; }
.dtool text { font-size: 11.500px; fill: #e0e0e0; }
.bold { font-weight: 700; }
.ital { font-style: italic; }
.wm { font: 700 12.500px Lato, sans-serif; fill: #fff; stroke: #d4d4d4; stroke-width: .7px; }
.pnav { position: absolute; top: 297px; height: 48px; width: 28px; border: 1px solid #6a6f73; background: #2d2f31; display: flex; align-items: center; justify-content: center; }
.prev { left: 0; border-left: 0; }
.next { right: 0; border-right: 0; }
.controls { position: absolute; left: 0; right: 0; bottom: 0; height: 71px; padding: 16px 12px 0; background: linear-gradient(rgba(26,27,31,0), rgba(26,27,31,.18) 30%, rgba(26,27,31,.9)); }
.track { height: 6px; background: rgba(250,253,252,.75); position: relative; display: flex; }
.played { width: 288px; background: #a435f0; }
.buffered { width: 240px; background: #6a6f73; }
.mark { position: absolute; top: -3px; width: 6px; height: 12px; background: #3e4143; }
.m1 { left: 345px; }
.m2 { left: 473px; }
.crow { display: flex; align-items: center; height: 22px; margin-top: 15px; color: #d1d7dc; }
.c1 { margin-left: 11px; }
.c2 { margin: -2px 0 0 23px; }
.rate { width: 48px; height: 18px; margin-left: 12px; background: #f7f9fa; color: #2d2f31; font: 700 14px/18px Inter, sans-serif; text-align: center; letter-spacing: -.5px; }
.c3 { margin: -2px 0 0 12px; }
.time { margin-left: 16px; width: 88px; color: #fff; font: 700 14px/22px Inter, sans-serif; letter-spacing: -.1px; }
.cr { margin-left: auto; display: grid; grid-template-columns: repeat(6, 38px); justify-items: center; align-items: center; margin-right: -2px; }

.below { padding: 0 16px; }
.ctabs { height: 50px; border-bottom: 1px solid #d1d7dc; display: flex; align-items: stretch; padding-left: 22px; font-weight: 700; font-size: 16px; line-height: 48px; color: #6a6f73; letter-spacing: -.25px; }
.mag { margin: 16px 23px 0 0; }
.ct { padding: 0 4px; margin-right: 16px; height: 50px; }
.ct.on { color: #2d2f31; border-bottom: 2px solid #2d2f31; letter-spacing: -.5px; }
.card { margin-top: 16px; height: 152px; border: 1px solid #d1d7dc; display: flex; padding: 16px 0 0 19px; }
.alarm { margin: 2px 18px 0 0; }
.card h3 { margin: 0; font-size: 16px; line-height: 20px; letter-spacing: -.14px; }
.card p { margin: 2px 0 0; font-size: 14px; line-height: 19.600px; letter-spacing: -.4px; white-space: nowrap; }
.btns { display: flex; margin-top: 17px; font-weight: 700; font-size: 14px; letter-spacing: -.3px; }
.go { width: 99px; height: 40px; background: #2d2f31; color: #fff; }
.dis { margin-left: 16px; }

.side { flex: 1; border-left: 1px solid #d1d7dc; display: flex; flex-direction: column; background: #fff; }
.shead { height: 54px; flex: none; border-top: 1px solid #d1d7dc; border-bottom: 1px solid #d1d7dc; display: flex; align-items: center; justify-content: space-between; padding: 0 19px 0 16px; font-weight: 700; font-size: 16px; letter-spacing: -.25px; }
.shead span { padding-bottom: 1px; }
.scroll { display: flex; margin-top: 1px; height: 820px; border-bottom: 1px solid #e4e8eb; }
.list { width: 442px; }
.lec { display: flex; padding: 10px 0 0 16px; }
.lec.current { background: #d1d7dc; padding-top: 9px; }
.cb { width: 16px; height: 16px; flex: none; border: 2px solid #2d2f31; display: flex; align-items: center; justify-content: center; margin-right: 16px; }
.cb.done { background: #2d2f31; }
.lb { flex: 1; }
.lt { font-size: 14px; line-height: 14px; height: 16px; letter-spacing: -.37px; }
.lm { display: flex; align-items: center; height: 28px; margin-top: 9px; font-size: 12px; color: #6a6f73; gap: 4px; }
.short .lm { height: 20px; margin-top: 8px; }
.current .lm { color: #2d2f31; }
.docicon { margin: 0 2px; }
.res { width: 124px; height: 28px; margin-left: auto; margin-right: 16px; border: 1px solid #2d2f31; display: flex; align-items: center; padding-left: 9px; color: #2d2f31; font-size: 14px; letter-spacing: -.45px; }
.res span { margin: 0 8px 0 4px; }
.sec { height: 92px; background: #f7f9fa; border-top: 1px solid #d1d7dc; padding: 16px 16px 0; }
.sh { display: flex; justify-content: space-between; font-weight: 700; font-size: 16px; line-height: 19px; letter-spacing: -.28px; padding-right: 5px; }
.sh span { width: 340px; }
.sh svg { transform: rotate(180deg); margin-top: 4px; }
.sm { font-size: 12px; line-height: 16px; margin-top: 4px; letter-spacing: -.1px; }

.sb { background: #f1f1f1; position: relative; width: 15px; flex: none; }
.sb b { position: absolute; left: 2px; width: 11px; background: #c1c1c1; }
.inner b { top: 93px; height: 56px; }
.outer b { top: 15px; height: 434px; }
.sb i { position: absolute; left: 4px; border: 4px solid transparent; }
.up { top: 2px; border-bottom-color: #505050 !important; }
.outer .up { border-bottom-color: #a3a3a3 !important; top: 3px; }
.down { bottom: 1px; border-top-color: #505050 !important; }
</style>
